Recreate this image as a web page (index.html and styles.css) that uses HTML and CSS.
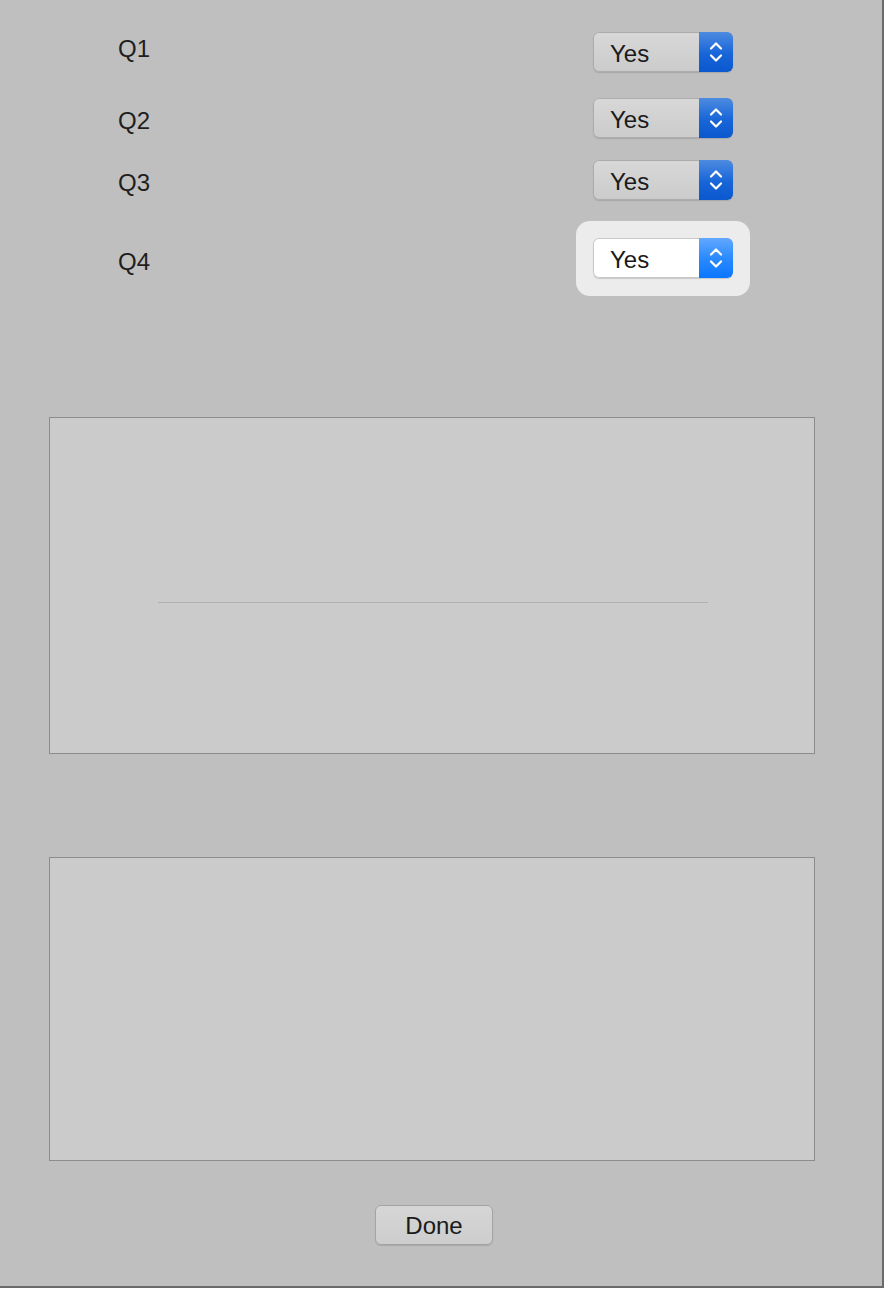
FILE: index.html
```html
<!DOCTYPE html>
<html lang="en">
  <head>
    <meta charset="utf-8" />
    <meta name="viewport" content="width=device-width, initial-scale=1" />
    <title>Questions</title>
    <link rel="stylesheet" href="styles.css">
  </head>
  <body>
    <div class="window">
      <div class="questions">
        <div class="question q-first">
          <span class="question-label">Q1</span>
          <div class="field">
            <div class="popup">
              <span class="popup-value">Yes</span>
              <span class="popup-arrows">
                <svg width="14" height="24" viewBox="0 0 14 24"><path d="M2 8.5 L7 3.5 L12 8.5 M2 15.5 L7 20.5 L12 15.5" fill="none" stroke="#fff" stroke-width="2.2" stroke-linecap="round" stroke-linejoin="round"/></svg>
              </span>
            </div>
          </div>
        </div>
        <div class="question q-second">
          <span class="question-label">Q2</span>
          <div class="field">
            <div class="popup">
              <span class="popup-value">Yes</span>
              <span class="popup-arrows">
                <svg width="14" height="24" viewBox="0 0 14 24"><path d="M2 8.5 L7 3.5 L12 8.5 M2 15.5 L7 20.5 L12 15.5" fill="none" stroke="#fff" stroke-width="2.2" stroke-linecap="round" stroke-linejoin="round"/></svg>
              </span>
            </div>
          </div>
        </div>
        <div class="question q-third">
          <span class="question-label">Q3</span>
          <div class="field">
            <div class="popup">
              <span class="popup-value">Yes</span>
              <span class="popup-arrows">
                <svg width="14" height="24" viewBox="0 0 14 24"><path d="M2 8.5 L7 3.5 L12 8.5 M2 15.5 L7 20.5 L12 15.5" fill="none" stroke="#fff" stroke-width="2.2" stroke-linecap="round" stroke-linejoin="round"/></svg>
              </span>
            </div>
          </div>
        </div>
        <div class="question q-fourth">
          <span class="question-label">Q4</span>
          <div class="field field-focused">
            <div class="popup popup-active">
              <span class="popup-value">Yes</span>
              <span class="popup-arrows">
                <svg width="14" height="24" viewBox="0 0 14 24"><path d="M2 8.5 L7 3.5 L12 8.5 M2 15.5 L7 20.5 L12 15.5" fill="none" stroke="#fff" stroke-width="2.2" stroke-linecap="round" stroke-linejoin="round"/></svg>
              </span>
            </div>
          </div>
        </div>
      </div>

      <div class="panel panel-top">
        <div class="panel-rule"></div>
      </div>

      <div class="panel panel-bottom"></div>

      <div class="actions">
        <button class="btn-done">Done</button>
      </div>
    </div>
  </body>
</html>
```

FILE: styles.css
```css
html {
  height: 100%;
}

body {
  margin: 0;
  background-color: #ffffff;
  font-family: "Helvetica Neue", "Liberation Sans", Arial, sans-serif;
  color: #1e1e1e;
}

.window {
  width: 882px;
  height: 1286px;
  background-color: #bfbfbf;
  border-right: 2px solid #6a6a6a;
  border-bottom: 2px solid #6a6a6a;
  overflow: hidden;
}

.questions {
  padding-top: 32px;
  padding-left: 118px;
}

.question {
  display: flex;
  align-items: center;
}

.q-second {
  margin-top: 26px;
}

.q-third {
  margin-top: 22px;
}

.q-fourth {
  margin-top: 21px;
}

.question-label {
  width: 458px;
  font-size: 24px;
  padding-top: 6px;
}

.q-first .question-label {
  padding-top: 0;
  padding-bottom: 6px;
}

.field {
  padding: 0 17px;
}

.field-focused {
  padding: 17px 17px 18px;
  background-color: #ececec;
  border-radius: 14px;
}

.popup {
  display: flex;
  width: 140px;
  height: 40px;
  box-sizing: border-box;
  border-radius: 6px;
  background: linear-gradient(#d8d8d8, #cbcbcb);
  box-shadow: inset 0 0 0 1px #acacac, 0 1px 1px rgba(0, 0, 0, 0.12);
  overflow: hidden;
}

.popup-value {
  flex: 1;
  padding: 3px 0 0 17px;
  font-size: 24px;
  line-height: 38px;
  color: #1a1a1a;
}

.popup-arrows {
  width: 34px;
  display: flex;
  align-items: center;
  justify-content: center;
  background: linear-gradient(#4d8be0, #1765d8 55%, #0b58cf);
}

.popup-active {
  background: #ffffff;
  box-shadow: inset 0 0 0 1px #c8c8c8, 0 1px 1px rgba(0, 0, 0, 0.15);
}

.popup-active .popup-arrows {
  background: linear-gradient(#62a8ff, #2b8bff 50%, #0a76ff);
}

.panel {
  margin-left: 49px;
  width: 766px;
  box-sizing: border-box;
  background-color: #cbcbcb;
  border: 1px solid #8c8c8c;
}

.panel-top {
  margin-top: 121px;
  height: 337px;
  padding: 184px 0 0 108px;
}

.panel-rule {
  width: 550px;
  height: 1px;
  background-color: #b0b0b0;
}

.panel-bottom {
  margin-top: 103px;
  height: 304px;
}

.actions {
  margin-top: 44px;
  padding-left: 375px;
}

.btn-done {
  width: 118px;
  height: 40px;
  margin: 0;
  padding: 2px 0 0;
  font-family: "Helvetica Neue", "Liberation Sans", Arial, sans-serif;
  font-size: 24px;
  color: #1a1a1a;
  background: linear-gradient(#d6d6d6, #cdcdcd);
  border: 1px solid #a4a4a4;
  border-radius: 6px;
  box-shadow: 0 1px 1px rgba(0, 0, 0, 0.12);
}
```
